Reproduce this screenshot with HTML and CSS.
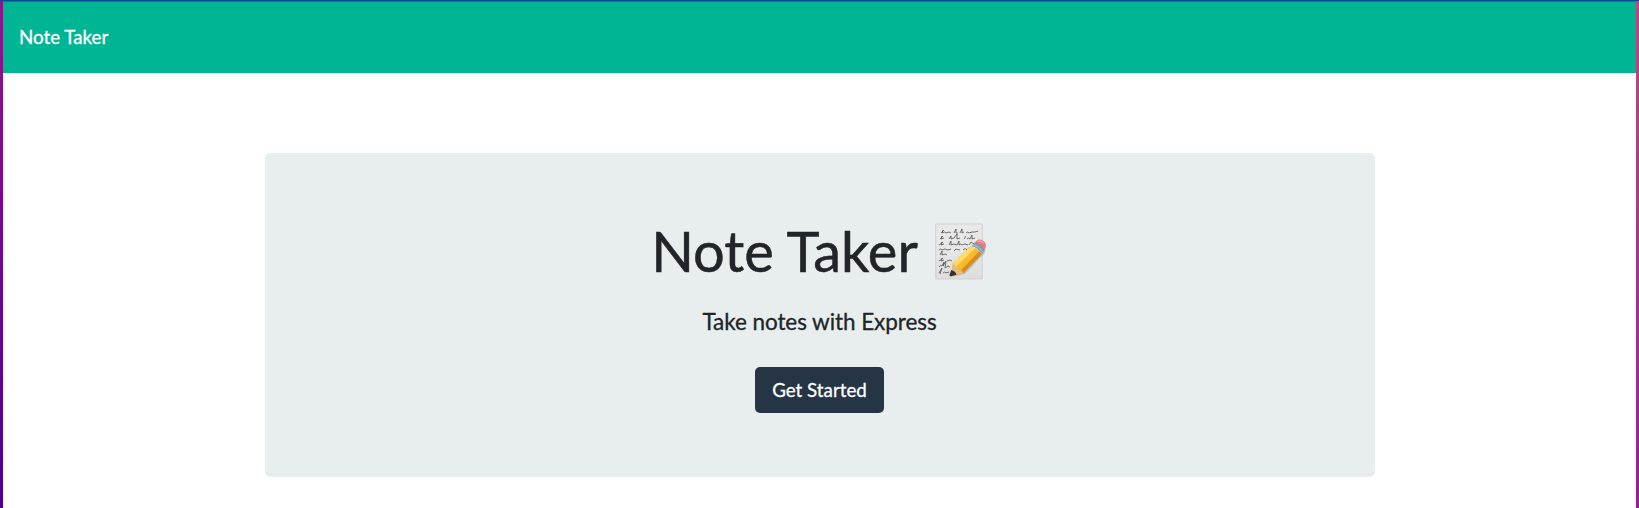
FILE: index.html
```html
<!DOCTYPE html>
<html lang="en">
<head>
<meta charset="utf-8">
<title>Note Taker</title>
<link rel="stylesheet" href="styles.css">
</head>
<body>
<div class="page">
  <nav class="navbar"><a class="brand">Note Taker</a></nav>
  <main class="jumbotron">
    <h1 class="title"><span>Note Taker</span>
      <svg class="memo" viewBox="0 0 56 60" aria-hidden="true">
        <defs>
          <linearGradient id="paper" x1="0" y1="0" x2="0" y2="1"><stop offset="0" stop-color="#e9e9e9"/><stop offset=".5" stop-color="#e6e6e6"/><stop offset="1" stop-color="#dcdddd"/></linearGradient>
          <linearGradient id="wood" x1="0" y1="0" x2="1" y2="1"><stop offset="0" stop-color="#ffd75a"/><stop offset=".5" stop-color="#f8b92b"/><stop offset="1" stop-color="#cf7d16"/></linearGradient>
        </defs>
        <rect x="3.800" y="4" width="46.400" height="55" fill="url(#paper)" stroke="#cdcfcf" stroke-width=".9"/>
        <g class="script">
          <path d="M9 13l3-3M11 10l-1 3q3-2 4 0l3-1 2 1M22 13l2-4v4h2M28 13l2-4v4l2-1M34 13q2-2 3 0l3-1 3 0 3-1"/>
          <path d="M8 19l3-3M10 16l-1 3 3-1M17 19l2-3v3l3-1 3-4v5l3-1M32 19l2-3M35 19q1-2 3 0l2-4v4l3-1"/>
          <path d="M7 25l4-3M10 22l-1 3 3-1M17 25l2-4v4l3-1 3 1 2-4v4q2-2 3 0l3-1 3 1M37 25l2-3 3 2"/>
          <path d="M7 30q2-2 3 0l3-1 3 1 3-1M22 31l2-2 4 1M31 30q2-3 4 0"/>
          <path d="M8 35l2-4v4l3-1 2 1"/>
          <path d="M7 41l4-3M10 38l-1 3 3-1M15 41l3-1 2 1"/>
          <path d="M7 47q2-3 3-1l2-4-1 4 3-5-1 7 3-2 2 1"/>
          <path d="M7 53l3-5-2 6M11 53q2-2 3 0l3-1"/>
        </g>
        <path d="M19 57l10-2 4-1 20-21v-3l-16-3-15 16z" fill="#666" opacity=".25"/>
        <path d="M21 42.500L39.500 26l10.500 8-18.500 19-13 3.500z" fill="url(#wood)"/>
        <path d="M21 42.500L39.500 26l3.500 2.500-19 18z" fill="#ffdb65"/>
        <path d="M29.500 50L47 31.500l3 2.500-18.500 19z" fill="#d78c1e"/>
        <path d="M21 42.500q1 4 4.500 4 1 3.500 6 6.500l-12.500 3z" fill="#e5bd83"/>
        <path d="M19.200 50l-1.700 5q0 1.500 1.500 1.200l5.500-1.500q-1-3.700-5.300-4.700z" fill="#34302e"/>
        <path d="M39.500 26l4-4q7 2 9.500 8l-3 4q-3-6-10.500-8z" fill="#829ba8"/>
        <path d="M41 24.600q7 2 10 7.500" fill="none" stroke="#b9c8ce"/>
        <path d="M43 22.500l2-2.300q3-1.500 6.500.8 3 2.500 2.200 6l-1.200 3q-3-6-9.500-7.500z" fill="#e97a87"/>
        <path d="M44.500 21.500q3-2.500 6.500.2l1.500 2q-4-2-8-2.200z" fill="#f8a3a9"/>
      </svg>
    </h1>
    <h4 class="subtitle">Take notes with Express</h4>
    <a class="button">Get Started</a>
  </main>
</div>
</body>
</html>
```
FILE: styles.css
```css
* { box-sizing: border-box; }
body {
  margin: 0;
  height: 508px;
  overflow: hidden;
  padding: 1px 3px 0;
  font-family: Lato, sans-serif;
  color: #212529;
  background:
    linear-gradient(#0d4795, #0d4795) top / 100% 1px no-repeat,
    linear-gradient(#8b1889, #7b0794 40%, #4b0092) left / 3px 100% no-repeat,
    linear-gradient(#b64c80, #9b1e91) right / 3px 100% no-repeat;
}
.page {
  height: 507px;
  background: #fff;
}
.navbar {
  height: 72px;
  padding: 0 16px 2px;
  display: flex;
  align-items: center;
  background: #00b594;
  border-top: 1px solid #226c95;
}
.brand {
  color: #fff;
  font-size: 18.75px;
  line-height: 28px;
  -webkit-text-stroke: .3px;
}
.jumbotron {
  width: 1110px;
  height: 324px;
  margin: 80px auto 0;
  padding: 64px 32px;
  border-radius: 5px;
  background: #e8eeee;
  display: flex;
  flex-direction: column;
  align-items: center;
}
.title {
  display: flex;
  align-items: center;
  gap: 14px;
  margin: 0 0 21px;
  height: 67px;
  font-size: 56px;
  font-weight: 400;
  line-height: 67px;
  -webkit-text-stroke: .5px;
}
.memo {
  width: 56px;
  height: 60px;
  margin-bottom: 2px;
  -webkit-text-stroke: 0;
}
.script {
  fill: none;
  stroke: #484848;
  stroke-width: .75;
}
.subtitle {
  margin: 0 0 28px;
  font-size: 22.5px;
  font-weight: 400;
  line-height: 34px;
  letter-spacing: -.07px;
  -webkit-text-stroke: .3px;
}
.button {
  width: 129px;
  height: 46px;
  border-radius: 5px;
  background: #263545;
  color: #fff;
  font-size: 18.75px;
  line-height: 46px;
  text-align: center;
  -webkit-text-stroke: .3px;
}
```
